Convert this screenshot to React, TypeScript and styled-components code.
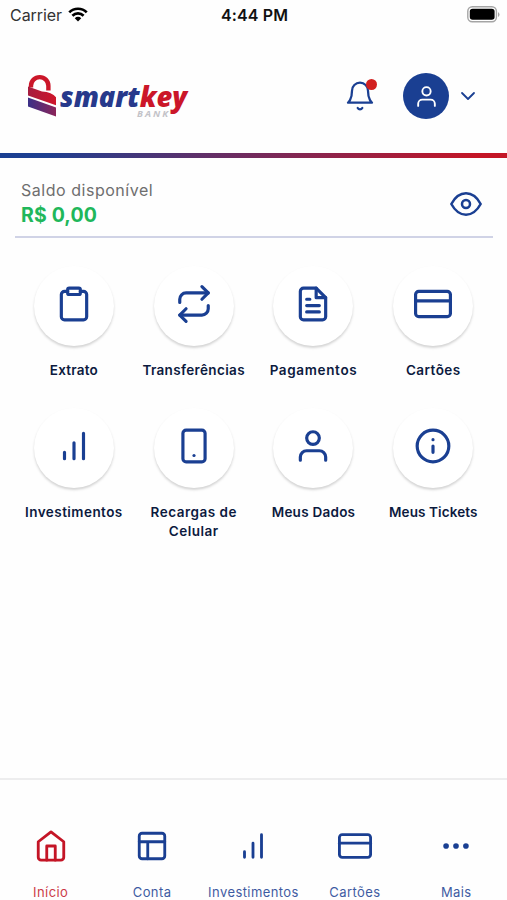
import React from "react";
import styled, { createGlobalStyle } from "styled-components";

const BLUE = "#1a3f92";
const RED = "#c41526";
const NAVY = "#0c1a3e";

const GlobalStyle = createGlobalStyle`
  *, *::before, *::after { box-sizing: border-box; }
  body { margin: 0; background: #fefefe; font-family: Inter, "Open Sans", sans-serif; }
`;

const Screen = styled.div`
  display: flex;
  flex-direction: column;
  width: 100%;
  height: 900px;
  overflow: hidden;
  background: #fefefe;
`;

const StatusBar = styled.div`
  display: grid;
  grid-template-columns: 1fr auto 1fr;
  align-items: center;
  height: 30px;
  padding: 0 8px 1px 10px;
  line-height: 20px;
`;

const Carrier = styled.div`
  display: flex;
  align-items: center;
  gap: 6px;
  font-size: 16px;
  letter-spacing: -0.05px;
  color: #333;
`;

const Clock = styled.div`
  font-size: 16px;
  font-weight: 600;
  letter-spacing: 0.15px;
  color: #111;
`;

const Battery = styled.svg`
  justify-self: end;
  display: block;
  margin: -1px -1px 0 0;
`;

const Header = styled.header`
  display: flex;
  align-items: center;
  height: 123px;
  padding: 9px 27px 0 24px;
`;

const Logo = styled.svg`
  display: block;
  margin-right: auto;
`;

const BellButton = styled.button`
  position: relative;
  display: flex;
  padding: 0;
  border: 0;
  background: none;
  color: ${BLUE};
`;

const AlertDot = styled.span`
  position: absolute;
  top: -1px;
  right: -1px;
  width: 11px;
  height: 11px;
  border-radius: 50%;
  background: #d2201f;
`;

const Avatar = styled.div`
  display: flex;
  align-items: center;
  justify-content: center;
  width: 46px;
  height: 46px;
  margin: 0 7px 0 27px;
  border-radius: 50%;
  background: ${BLUE};
  color: #fff;
`;

const Chevron = styled.div`
  display: flex;
  color: ${BLUE};
`;

const Stripe = styled.div`
  height: 5px;
  background: linear-gradient(90deg, ${BLUE} 0%, #1f3f90 10%, #642e66 42%, #c41526 94%);
`;

const Balance = styled.section`
  display: flex;
  align-items: center;
  justify-content: space-between;
  height: 80px;
  margin: 0 14px 0 15px;
  padding: 13px 11px 0 6px;
  border-bottom: 2px solid #d0d3e6;
  color: ${BLUE};
`;

const BalanceLabel = styled.div`
  font-size: 16px;
  line-height: 24px;
  letter-spacing: 0.53px;
  color: #6e6e6e;
`;

const BalanceValue = styled.div`
  font-size: 19.5px;
  font-weight: 700;
  line-height: 27px;
  letter-spacing: 0.15px;
  color: #20b75a;
`;

const Actions = styled.main`
  display: grid;
  grid-template-columns: repeat(4, 119.8px);
  grid-auto-rows: 141.5px;
  flex: 1;
  align-content: start;
  padding: 28px 0 0 14px;
`;

const Action = styled.div`
  display: flex;
  flex-direction: column;
  align-items: center;
`;

const Disc = styled.div`
  display: flex;
  align-items: center;
  justify-content: center;
  width: 80px;
  height: 80px;
  padding-bottom: 4px;
  border-radius: 50%;
  background: #fff;
  box-shadow: 0 2px 2.5px rgba(0, 0, 0, 0.17);
  color: ${BLUE};
`;

const ActionLabel = styled.div<{ $spacing: number }>`
  margin-top: 15px;
  font-size: 13.5px;
  font-weight: 600;
  line-height: 19px;
  letter-spacing: ${(p) => p.$spacing}px;
  text-align: center;
  white-space: pre;
  color: ${NAVY};
`;

const TabBar = styled.nav`
  display: grid;
  grid-template-columns: repeat(5, 1fr);
  height: 122px;
  border-top: 2px solid #ededee;
`;

const Tab = styled.div<{ $active: boolean }>`
  display: flex;
  flex-direction: column;
  align-items: center;
  padding-top: 48.5px;
  color: ${(p) => (p.$active ? RED : BLUE)};
`;

const TabLabel = styled.div`
  margin-top: 20.5px;
  font-size: 13px;
  line-height: 18px;
  letter-spacing: 0.42px;
  white-space: nowrap;
  opacity: 0.85;
`;

const shapes = {
  clipboard: (
    <>
      <path d="M16 4h2a2 2 0 0 1 2 2v14a2 2 0 0 1-2 2H6a2 2 0 0 1-2-2V6a2 2 0 0 1 2-2h2" />
      <rect x="8" y="2" width="8" height="4" rx="1" />
    </>
  ),
  repeat: (
    <>
      <path d="m17 1 4 4-4 4" />
      <path d="M3 11V9a4 4 0 0 1 4-4h14" />
      <path d="m7 23-4-4 4-4" />
      <path d="M21 13v2a4 4 0 0 1-4 4H3" />
    </>
  ),
  file: (
    <>
      <path d="M14 2H6a2 2 0 0 0-2 2v16a2 2 0 0 0 2 2h12a2 2 0 0 0 2-2V8z" />
      <path d="M14 2v6h6M16 13H8M16 17H8M10 9H8" />
    </>
  ),
  card: (
    <>
      <rect x="1" y="4" width="22" height="16" rx="2" />
      <path d="M1 10h22" />
    </>
  ),
  bars: <path d="M18 20V4M12 20V10M6 20v-4" />,
  phone: (
    <>
      <rect x="5" y="2" width="14" height="20" rx="2" />
      <path d="M12 18h.01" />
    </>
  ),
  user: (
    <>
      <path d="M20 21v-2a4 4 0 0 0-4-4H8a4 4 0 0 0-4 4v2" />
      <circle cx="12" cy="7" r="4" />
    </>
  ),
  info: (
    <>
      <circle cx="12" cy="12" r="10" />
      <path d="M12 16v-4M12 8h.01" />
    </>
  ),
  home: (
    <>
      <path d="m3 9 9-7 9 7v11a2 2 0 0 1-2 2H5a2 2 0 0 1-2-2z" />
      <path d="M9 22V12h6v10" />
    </>
  ),
  layout: (
    <>
      <rect x="3" y="3" width="18" height="18" rx="2" />
      <path d="M3 9h18M9 21V9" />
    </>
  ),
  more: (
    <>
      <circle cx="5" cy="12" r="1" />
      <circle cx="12" cy="12" r="1" />
      <circle cx="19" cy="12" r="1" />
    </>
  ),
  eye: (
    <>
      <path d="M1 12C3.6 7.2 7.2 4 12 4s8.4 3.2 11 8c-2.6 4.8-6.2 8-11 8S3.6 16.8 1 12z" />
      <circle cx="12" cy="12" r="3" />
    </>
  ),
  bell: (
    <>
      <path d="M18 8A6 6 0 0 0 6 8c0 7-3 9-3 9h18s-3-2-3-9" />
      <path d="M13.73 21a2 2 0 0 1-3.46 0" />
    </>
  ),
  chevron: <path d="m6 9 6 6 6-6" />,
};

type IconName = keyof typeof shapes;

function Icon({ name, size, stroke = 2 }: { name: IconName; size: number; stroke?: number }) {
  return (
    <svg
      width={size}
      height={size}
      viewBox="0 0 24 24"
      fill="none"
      stroke="currentColor"
      strokeWidth={stroke}
      strokeLinecap="round"
      strokeLinejoin="round"
      overflow="visible"
    >
      {shapes[name]}
    </svg>
  );
}

const actions: { icon: IconName; label: string; spacing: number }[] = [
  { icon: "clipboard", label: "Extrato", spacing: 0.2 },
  { icon: "repeat", label: "Transferências", spacing: 0.35 },
  { icon: "file", label: "Pagamentos", spacing: 0.65 },
  { icon: "card", label: "Cartões", spacing: 0.45 },
  { icon: "bars", label: "Investimentos", spacing: 0.45 },
  { icon: "phone", label: "Recargas de\nCelular", spacing: 0.5 },
  { icon: "user", label: "Meus Dados", spacing: 0.25 },
  { icon: "info", label: "Meus Tickets", spacing: 0.1 },
];

const tabs: { icon: IconName; label: string }[] = [
  { icon: "home", label: "Início" },
  { icon: "layout", label: "Conta" },
  { icon: "bars", label: "Investimentos" },
  { icon: "card", label: "Cartões" },
  { icon: "more", label: "Mais" },
];

function SmartkeyLogo() {
  return (
    <Logo width="166" height="48" viewBox="0 0 166 48" role="img" aria-label="smartkey bank">
      <defs>
        <linearGradient id="band" x1="0" x2="1">
          <stop offset="0" stopColor="#a51d40" />
          <stop offset="1" stopColor="#cf152a" />
        </linearGradient>
        <linearGradient id="base" x1="0" x2="1">
          <stop offset="0" stopColor="#3a3088" />
          <stop offset="1" stopColor="#8b2458" />
        </linearGradient>
      </defs>
      <path d="M7 15.5V13.7A8.7 8.6 0 0 1 24.4 13.7V18.5" fill="none" stroke="#cb1629" strokeWidth="4.4" />
      <path d="M4 14.5 18 19.5Q28 20 32 25.2V33.2L4 23.4Z" fill="url(#band)" />
      <path d="M4 25.4 32 35.4V44.6L4 34.6Z" fill="url(#base)" />
      <text
        x="36"
        y="34.5"
        fontFamily="Open Sans, sans-serif"
        fontSize="27.5"
        fontWeight="800"
        fontStyle="italic"
        textLength="127"
        lengthAdjust="spacingAndGlyphs"
      >
        <tspan fill="#27398b">smart</tspan>
        <tspan fill="#cb1629">key</tspan>
      </text>
      <text
        x="113"
        y="45"
        fontFamily="Open Sans, sans-serif"
        fontSize="9.5"
        fontWeight="700"
        fontStyle="italic"
        textLength="31"
        fill="#c3c3c8"
      >
        BANK
      </text>
    </Logo>
  );
}

export default function App() {
  return (
    <>
      <GlobalStyle />
      <Screen>
        <StatusBar>
          <Carrier>
            Carrier
            <svg width="20" height="15.2" viewBox="0 0 21 16" fill="none" stroke="#000" strokeWidth="2.8">
              <path d="M1.3 5.7a13 13 0 0 1 18.4 0M4.6 9.2a8.3 8.3 0 0 1 11.8 0" />
              <path d="M10.5 15.3 7.1 11.8a4.8 4.8 0 0 1 6.8 0z" fill="#000" stroke="none" />
            </svg>
          </Carrier>
          <Clock>4:44 PM</Clock>
          <Battery width="33" height="17" viewBox="0 0 33 17">
            <rect x="0.8" y="0.8" width="28.6" height="15" rx="4.5" fill="#fff" stroke="#a5a5a5" strokeWidth="1.4" />
            <rect x="2.8" y="2.8" width="24.8" height="11" rx="2.8" fill="#000" />
            <path d="M31 6v5q1.5-1 1.5-2.5T31 6z" fill="#a5a5a5" />
          </Battery>
        </StatusBar>

        <Header>
          <SmartkeyLogo />
          <BellButton aria-label="Notificações">
            <Icon name="bell" size={32} stroke={1.7} />
            <AlertDot />
          </BellButton>
          <Avatar>
            <Icon name="user" size={25} stroke={1.8} />
          </Avatar>
          <Chevron>
            <Icon name="chevron" size={24} stroke={1.8} />
          </Chevron>
        </Header>
        <Stripe />

        <Balance>
          <div>
            <BalanceLabel>Saldo disponível</BalanceLabel>
            <BalanceValue>R$ 0,00</BalanceValue>
          </div>
          <Icon name="eye" size={32} stroke={1.9} />
        </Balance>

        <Actions>
          {actions.map((a) => (
            <Action key={a.label}>
              <Disc>
                <Icon name={a.icon} size={38} />
              </Disc>
              <ActionLabel $spacing={a.spacing}>{a.label}</ActionLabel>
            </Action>
          ))}
        </Actions>

        <TabBar>
          {tabs.map((t, i) => (
            <Tab key={t.label} $active={i === 0}>
              <Icon name={t.icon} size={34} />
              <TabLabel>{t.label}</TabLabel>
            </Tab>
          ))}
        </TabBar>
      </Screen>
    </>
  );
}
